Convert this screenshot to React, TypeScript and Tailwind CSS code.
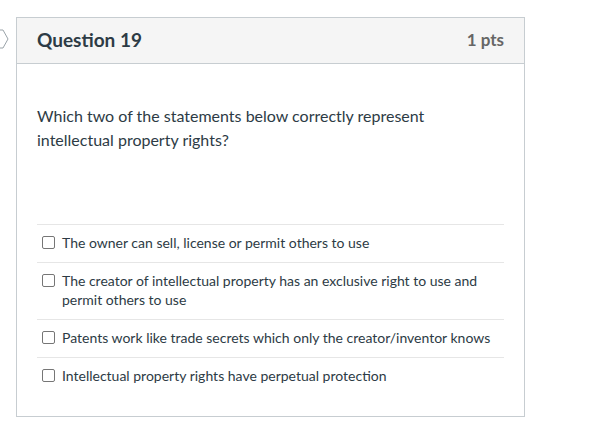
import React from "react";

const answers = [
  "The owner can sell, license or permit others to use",
  "The creator of intellectual property has an exclusive right to use and permit others to use",
  "Patents work like trade secrets which only the creator/inventor knows",
  "Intellectual property rights have perpetual protection",
];

export default function App() {
  return (
    <div
      className="relative w-[605px] h-[438px] bg-white text-[#2d3b45]"
      style={{ fontFamily: "Lato, 'Open Sans', sans-serif" }}
    >
      <svg
        className="absolute left-[-6px] top-[29px]"
        width="16"
        height="20"
        viewBox="0 0 16 20"
      >
        <path
          d="M1 1 H9 L14 10 L9 19 H1"
          fill="none"
          stroke="#9aa3a9"
          strokeWidth="1"
        />
      </svg>
      <div className="absolute left-[16px] top-[17px] w-[509px] h-[400px] border border-[#c7cdd1] flex flex-col">
        <div className="h-[46px] bg-[#f5f5f5] border-b border-[#c7cdd1] flex items-center justify-between pl-[20px] pr-[20px]">
          <span className="text-[19px] font-bold text-[#2d3b45] -mt-[1px]">Question 19</span>
          <span className="text-[17px] font-bold text-[#666666] -mt-[1px]">1 pts</span>
        </div>
        <div className="px-[20px] pt-[40px]">
          <p className="text-[16px] leading-[24px] pr-[40px]">
            Which two of the statements below correctly represent intellectual property rights?
          </p>
          <div className="mt-[72px]">
            {answers.map((a, i) => (
              <div
                key={i}
                className="flex items-start border-t border-[#e6e6e6] pt-[8px] pb-[10px] pl-[5px] pr-[10px]"
              >
                <span className="mt-[3px] w-[13px] h-[13px] shrink-0 rounded-[2px] border border-[#767676] bg-white" />
                <span className="ml-[7px] text-[14px] leading-[19px]">{a}</span>
              </div>
            ))}
          </div>
        </div>
      </div>
    </div>
  );
}
